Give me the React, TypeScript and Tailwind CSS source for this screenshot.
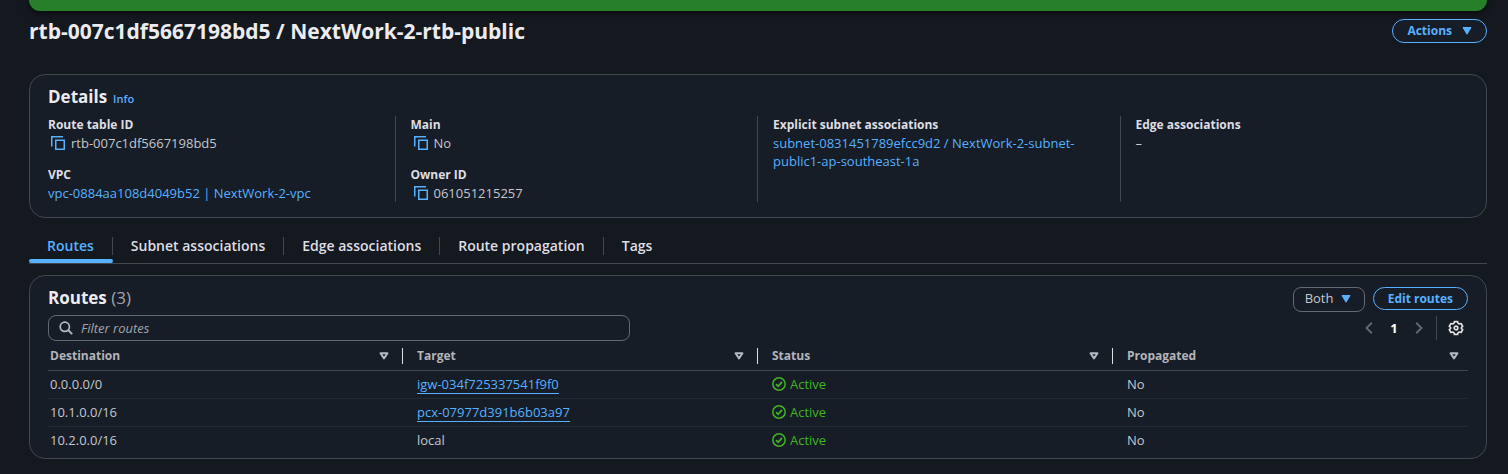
import type { ReactNode } from "react";

const tabs = ["Routes", "Subnet associations", "Edge associations", "Route propagation", "Tags"];

const columns = ["Destination", "Target", "Status", "Propagated"];

type Route = { destination: string; target: string; linked: boolean };

const routes: Route[] = [
  { destination: "0.0.0.0/0", target: "igw-034f725337541f9f0", linked: true },
  { destination: "10.1.0.0/16", target: "pcx-07977d391b6b03a97", linked: true },
  { destination: "10.2.0.0/16", target: "local", linked: false },
];

function CaretDown({ className = "" }: { className?: string }) {
  return (
    <svg viewBox="0 0 10 8" className={`h-2 w-2.5 fill-[#58b1ff] ${className}`} aria-hidden="true">
      <path d="M1 .5h8L5 7.2z" stroke="#58b1ff" strokeLinejoin="round" />
    </svg>
  );
}

function SortIcon() {
  return (
    <svg viewBox="0 0 10 8" className="h-2 w-2.5 fill-none stroke-[#b6bac2]" aria-hidden="true">
      <path d="M1.5 1.2h7L5 6.4z" strokeWidth="1.9" strokeLinejoin="round" />
    </svg>
  );
}

function CopyIcon() {
  return (
    <svg viewBox="0 0 14 14" className="size-3.5 fill-none stroke-[#58b1ff]" aria-hidden="true">
      <path d="M.75 10.5V.75H12" strokeWidth="1.5" />
      <path d="M4.75 4.25h8.5v9h-8.5z" strokeWidth="1.5" />
    </svg>
  );
}

function CheckIcon() {
  return (
    <svg viewBox="0 0 14 14" className="size-3.5 fill-none stroke-[#3fb424]" aria-hidden="true">
      <circle cx="7" cy="7" r="6.2" strokeWidth="1.5" />
      <path d="M4 7.2 6.2 9.3 10 4.9" strokeWidth="1.8" />
    </svg>
  );
}

function SearchIcon() {
  return (
    <svg viewBox="0 0 14 14" className="size-3.5 shrink-0 fill-none stroke-[#b6bac2]" aria-hidden="true">
      <circle cx="5.8" cy="5.8" r="4.6" strokeWidth="1.7" />
      <path d="m9.2 9.2 4 4" strokeWidth="1.9" />
    </svg>
  );
}

function GearIcon() {
  return (
    <svg viewBox="0 0 16 16" className="size-4 fill-none stroke-[#dedee3]" aria-hidden="true">
      <path
        d="M6.4 1.6h3.2l.5 1.7 1.2.7 1.8-.5 1.6 2.8-1.3 1.2v1l1.3 1.2-1.6 2.8-1.8-.5-1.2.7-.5 1.7H6.4l-.5-1.7-1.2-.7-1.8.5-1.6-2.8 1.3-1.2v-1L1.3 6.3l1.6-2.8 1.8.5 1.2-.7z"
        strokeWidth="1.7"
        strokeLinejoin="round"
      />
      <circle cx="8" cy="8" r="1.8" strokeWidth="1.7" />
    </svg>
  );
}

function Chevron({ flip = false }: { flip?: boolean }) {
  return (
    <svg viewBox="0 0 8 12" className={`h-3 w-2 fill-none stroke-[#656871] ${flip ? "-scale-x-100" : ""}`} aria-hidden="true">
      <path d="M6.8 .8 1.5 6l5.3 5.2" strokeWidth="1.9" />
    </svg>
  );
}

function Field({ label, children }: { label: string; children: ReactNode }) {
  return (
    <div>
      <dt className="text-xs leading-[18px] font-bold text-[#dedee3]">{label}</dt>
      <dd>{children}</dd>
    </div>
  );
}

function Copyable({ value }: { value: string }) {
  return (
    <span className="flex items-center gap-1.5 pl-[3px]">
      <button type="button" aria-label={`Copy ${value}`} className="cursor-pointer">
        <CopyIcon />
      </button>
      {value}
    </span>
  );
}

export default function App() {
  return (
    <div className="min-h-screen bg-[#14181f] pr-[21px] pl-[29px] font-['Open_Sans','Noto_Sans',sans-serif] text-[13px] leading-[18px] text-[#c6c6cd]">
      <div role="status" className="h-[11px] rounded-b-xl bg-[#26802a] shadow-[0_2px_6px_rgba(0,0,0,0.6)]" />

      <header className="flex items-start justify-between pt-2">
        <h1 className="text-[21px] leading-6 font-bold text-[#ebebf0]">rtb-007c1df5667198bd5 / NextWork-2-rtb-public</h1>
        <button
          type="button"
          className="flex h-6 cursor-pointer items-center gap-2.5 rounded-full border border-[#58b1ff] bg-[#161d26] px-3.5 text-xs font-bold text-[#58b1ff]"
        >
          Actions
          <CaretDown />
        </button>
      </header>

      <section className="mt-[31px] rounded-2xl border border-[#424650] bg-[#161d26] pt-[11px] pb-[15px]">
        <div className="flex items-baseline gap-1.5 px-[18px]">
          <h2 className="text-[17px] leading-[22px] font-bold text-[#ebebf0]">Details</h2>
          <a href="#info" className="text-[11px] leading-4 font-semibold text-[#58b1ff]">
            Info
          </a>
        </div>
        <dl className="mt-2 grid grid-cols-4 pr-1 pl-0.5">
          <div className="space-y-3.5 border-l border-transparent px-[15px]">
            <Field label="Route table ID">
              <Copyable value="rtb-007c1df5667198bd5" />
            </Field>
            <Field label="VPC">
              <a href="#vpc" className="text-[#58b1ff]">
                vpc-0884aa108d4049b52 | NextWork-2-vpc
              </a>
            </Field>
          </div>
          <div className="space-y-3.5 border-l border-[#424650] px-[15px]">
            <Field label="Main">
              <Copyable value="No" />
            </Field>
            <Field label="Owner ID">
              <Copyable value="061051215257" />
            </Field>
          </div>
          <div className="border-l border-[#424650] px-[15px]">
            <Field label="Explicit subnet associations">
              <a href="#subnet" className="text-[#58b1ff]">
                subnet-0831451789efcc9d2 / NextWork-2-subnet-public1-ap-southeast-1a
              </a>
            </Field>
          </div>
          <div className="border-l border-[#424650] px-[15px]">
            <Field label="Edge associations">–</Field>
          </div>
        </dl>
      </section>

      <div role="tablist" className="flex items-center border-b border-[#424650] pt-3.5">
        {tabs.map((tab, i) => (
          <button
            key={tab}
            type="button"
            role="tab"
            aria-selected={i === 0}
            className={`group cursor-pointer text-sm font-semibold ${i === 0 ? "text-[#58b1ff]" : "text-[#dedee3]"}`}
          >
            <span className="mt-[5px] mb-1 block border-r border-[#424650] px-[18px] leading-[18px] group-last:border-transparent">
              {tab}
            </span>
            <span className={`block h-1 rounded-sm ${i === 0 ? "bg-[#58b1ff]" : ""}`} />
          </button>
        ))}
      </div>

      <section className="mt-[11px] rounded-2xl border border-[#424650] bg-[#161d26] px-[18px] pt-[11px] pb-1">
        <div className="flex items-start justify-between">
          <h2 className="text-[17px] leading-[22px] font-bold text-[#ebebf0]">
            Routes <span className="font-normal text-[#a4a4ad]">(3)</span>
          </h2>
          <div className="flex items-start gap-2">
            <div className="relative">
              <select
                aria-label="Route origin"
                defaultValue="Both"
                className="block h-[25px] w-[72px] cursor-pointer appearance-none rounded-lg border border-[#656871] bg-[#161d26] pb-1 pl-[11px]"
              >
                <option>Both</option>
              </select>
              <CaretDown className="pointer-events-none absolute top-2 right-3.5" />
            </div>
            <button
              type="button"
              className="h-[23px] cursor-pointer rounded-full border border-[#58b1ff] px-3.5 text-xs leading-5 font-bold text-[#58b1ff]"
            >
              Edit routes
            </button>
          </div>
        </div>

        <div className="mt-[3px] flex items-center justify-between">
          <label className="flex h-[26px] w-[41%] items-center gap-2 rounded-lg border border-[#656871] px-2.5">
            <SearchIcon />
            <input
              type="text"
              aria-label="Filter routes"
              placeholder="Filter routes"
              className="w-full bg-transparent outline-none placeholder:text-[#a4a4ad] placeholder:italic"
            />
          </label>
          <nav aria-label="Pagination" className="flex items-center pr-1">
            <button type="button" aria-label="Previous page" className="cursor-pointer">
              <Chevron />
            </button>
            <button type="button" className="w-[42px] cursor-pointer font-bold text-white">
              1
            </button>
            <button type="button" aria-label="Next page" className="cursor-pointer">
              <Chevron flip />
            </button>
            <span className="ml-[13px] h-6 border-l border-[#424650]" />
            <button type="button" aria-label="Preferences" className="ml-[11px] cursor-pointer">
              <GearIcon />
            </button>
          </nav>
        </div>

        <table className="mt-0.5 w-full table-fixed border-collapse">
          <thead>
            <tr className="border-b border-[#424650]">
              {columns.map((column) => (
                <th key={column} scope="col" className="group h-[27px] p-0 text-left text-xs font-bold text-[#b4b4bb]">
                  <div className="flex h-4 items-center justify-between border-r border-[#dedee3] pr-[13px] pl-3.5 group-first:pl-0.5 group-last:border-transparent group-last:pr-2">
                    {column}
                    <SortIcon />
                  </div>
                </th>
              ))}
            </tr>
          </thead>
          <tbody>
            {routes.map((route) => (
              <tr key={route.destination} className="h-7 border-b border-[#232b37] last:border-0">
                <td className="p-0 pl-0.5">{route.destination}</td>
                <td className="p-0 pl-3.5">
                  {route.linked ? (
                    <a href={`#${route.target}`} className="border-b border-[#58b1ff] text-[#58b1ff]">
                      {route.target}
                    </a>
                  ) : (
                    route.target
                  )}
                </td>
                <td className="p-0 pl-3.5">
                  <span className="flex items-center gap-1 text-[#3fb424]">
                    <CheckIcon />
                    Active
                  </span>
                </td>
                <td className="p-0 pl-3.5">No</td>
              </tr>
            ))}
          </tbody>
        </table>
      </section>
    </div>
  );
}
